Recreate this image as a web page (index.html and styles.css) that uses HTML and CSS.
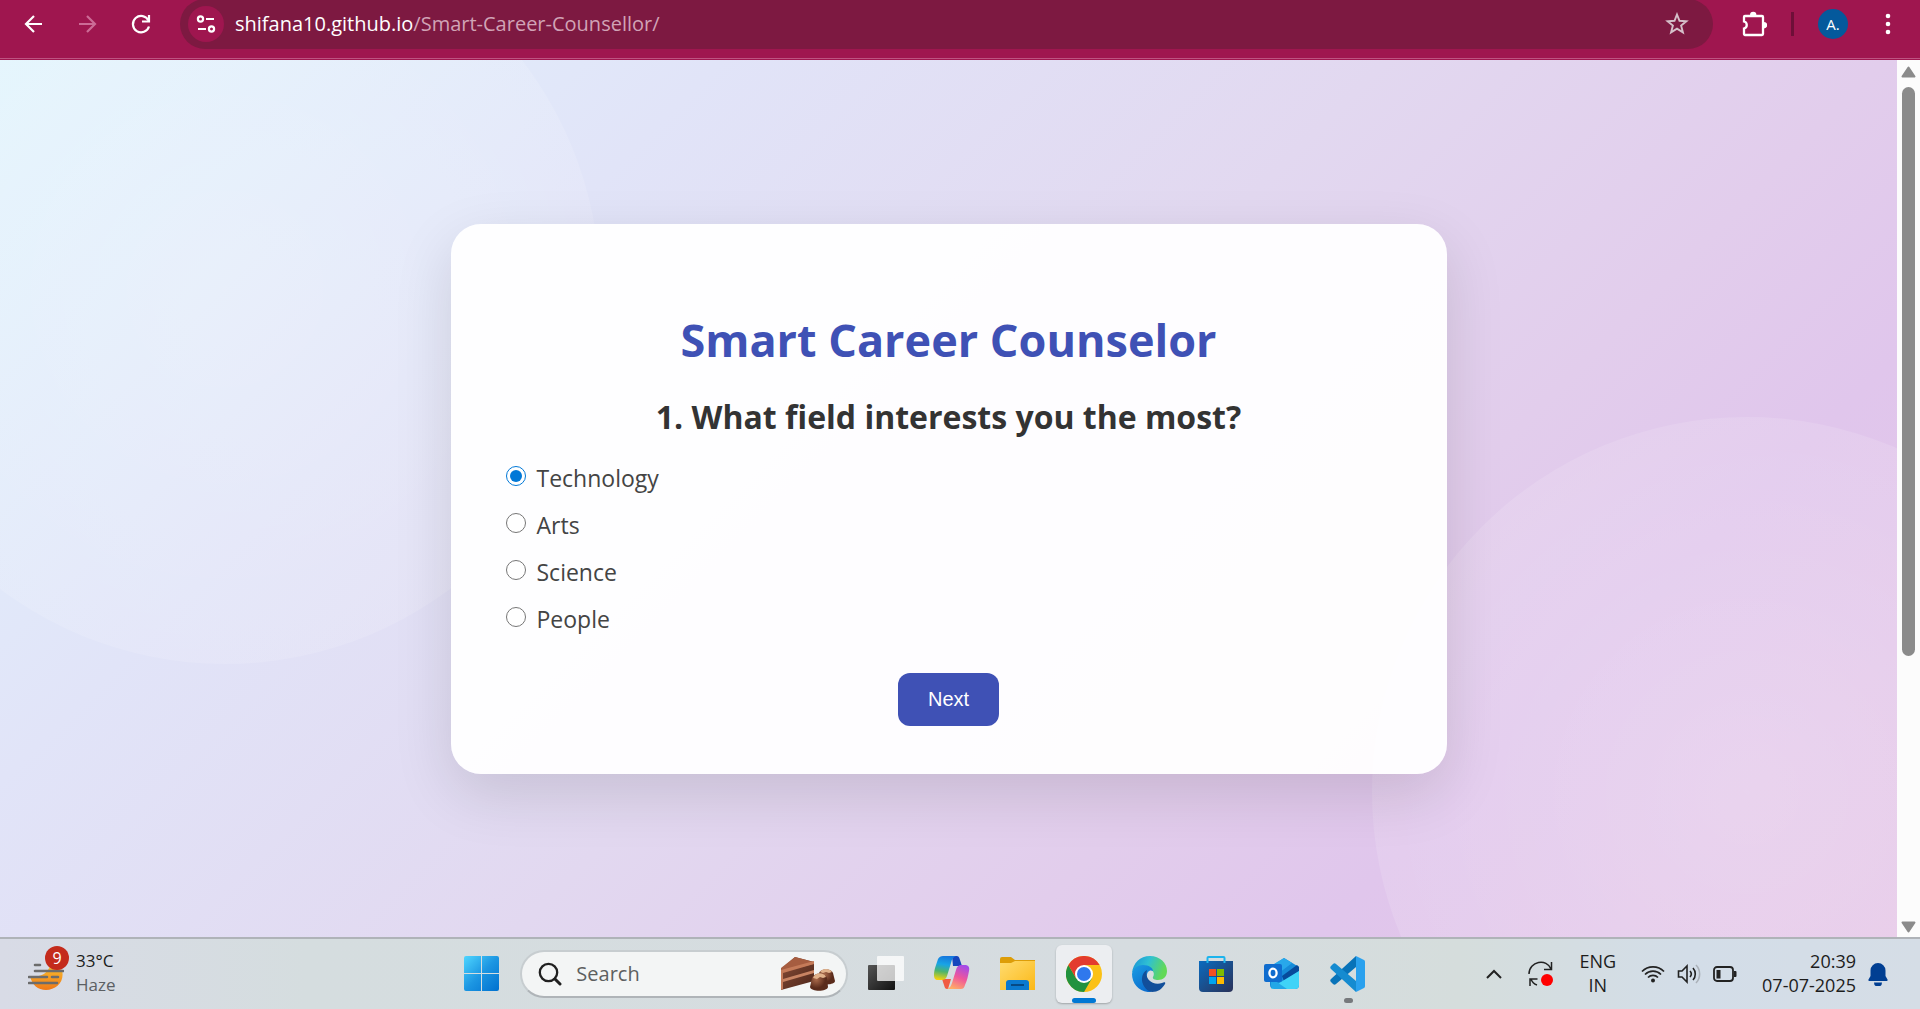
FILE: index.html
```html
<!DOCTYPE html>
<html lang="en">
<head>
<meta charset="utf-8">
<title>Smart Career Counselor</title>
<link rel="stylesheet" href="styles.css">
</head>
<body>
<header class="toolbar">
  <nav class="nav-buttons" aria-label="Navigation">
    <button class="icon-button" type="button" aria-label="Back"><svg width="22" height="22" viewBox="0 0 22 22"><path d="M20 11H4M12 3l-8 8 8 8" fill="none" stroke="#fff" stroke-width="2.2"/></svg></button>
    <button class="icon-button" type="button" aria-label="Forward"><svg width="22" height="22" viewBox="0 0 22 22"><path d="M3 11h16M11 3l8 8-8 8" fill="none" stroke="#cc6b96" stroke-width="2.2"/></svg></button>
    <button class="icon-button" type="button" aria-label="Reload"><svg width="22" height="22" viewBox="0 0 22 22"><path d="M18.500 7.500A8.200 8.200 0 1 0 19 13.500" fill="none" stroke="#fff" stroke-width="2.200"/><path d="M19 2v6.500h-7" fill="none" stroke="#fff" stroke-width="2.200"/></svg></button>
  </nav>
  <div class="omnibox">
    <button class="site-info" type="button" aria-label="Site information"><svg width="22" height="22" viewBox="0 0 22 22" fill="none" stroke="#fff" stroke-width="2.200"><circle cx="5.500" cy="6" r="2.600"/><path d="M11 6h8M3 16h8"/><circle cx="16.500" cy="16" r="2.600"/></svg></button>
    <a class="address" href="#">shifana10.github.io<span class="address-path">/Smart-Career-Counsellor/</span></a>
    <button class="icon-button" type="button" aria-label="Bookmark"><svg width="24" height="24" viewBox="0 0 24 24"><path d="M12 2.500l2.500 6.300 6.900.4-5.300 4.400 1.800 6.700-5.900-3.700-5.900 3.700 1.800-6.700-5.300-4.400 6.900-.4z" fill="none" stroke="#d5bfc9" stroke-width="1.900"/></svg></button>
  </div>
  <div class="toolbar-end">
    <button class="icon-button" type="button" aria-label="Extensions"><svg width="26" height="26" viewBox="0 0 26 26"><path d="M4 5h17a1 1 0 0 1 1 1v17a1 1 0 0 1-1 1H4a1 1 0 0 1-1-1v-5.500a3.600 3.600 0 0 0 0-7V6a1 1 0 0 1 1-1z" fill="none" stroke="#fff" stroke-width="2.300"/><path d="M9 4a3.200 3.200 0 0 1 6.400 0zM23 11a3.200 3.200 0 0 1 0 6.400z" fill="#fff"/></svg></button>
    <span class="divider"></span>
    <button class="avatar" type="button">A.</button>
    <button class="icon-button" type="button" aria-label="Menu"><svg width="8" height="24" viewBox="0 0 8 24" fill="#fff"><circle cx="4" cy="4" r="2.300"/><circle cx="4" cy="12" r="2.300"/><circle cx="4" cy="20" r="2.300"/></svg></button>
  </div>
</header>

<div class="viewport">
  <main class="page">
    <form class="card">
      <h1 class="title">Smart Career Counselor</h1>
      <fieldset class="question">
        <legend class="question-text">1. What field interests you the most?</legend>
        <label class="option"><input class="radio" type="radio" name="field" checked>Technology</label>
        <label class="option"><input class="radio" type="radio" name="field">Arts</label>
        <label class="option"><input class="radio" type="radio" name="field">Science</label>
        <label class="option"><input class="radio" type="radio" name="field">People</label>
      </fieldset>
      <button class="next" type="button">Next</button>
    </form>
  </main>
  <div class="scrollbar">
    <svg width="15" height="12" viewBox="0 0 15 12"><path d="M7.500 1.500L13.500 10.500H1.500z" fill="#8b8b8b" stroke="#8b8b8b" stroke-width="2" stroke-linejoin="round"/></svg>
    <div class="track"><div class="thumb"></div></div>
    <svg width="15" height="12" viewBox="0 0 15 12"><path d="M7.500 10.500L13.500 1.500H1.500z" fill="#8b8b8b" stroke="#8b8b8b" stroke-width="2" stroke-linejoin="round"/></svg>
  </div>
</div>

<footer class="taskbar">
  <button class="weather" type="button">
    <span class="weather-icon">
      <svg width="36" height="36" viewBox="0 0 36 36"><defs><linearGradient id="sun" x2="0" y2="1"><stop stop-color="#f8bd2d"/><stop offset="1" stop-color="#f07818"/></linearGradient></defs><path d="M2 20C14 22 20 16 22 10l12 4c3 12-6 20-16 20C10 34 4 29 2 20z" fill="url(#sun)"/><path d="M7 9h5M7 15h28M1 21h18M24 21h6M1 27h28" stroke="#6c6c6c" stroke-width="2.600" stroke-linecap="round"/></svg>
      <span class="badge">9</span>
    </span>
    <span class="stack"><span>33°C</span><span class="muted">Haze</span></span>
  </button>

  <div class="apps">
    <button class="app" type="button" aria-label="Start"><svg width="36" height="36" viewBox="0 0 36 36"><defs><linearGradient id="win" x2="1" y2="1"><stop stop-color="#4fd6ff"/><stop offset=".5" stop-color="#1c96e2"/><stop offset="1" stop-color="#0070cf"/></linearGradient></defs><path d="M2 0h15v17H0V2a2 2 0 0 1 2-2zM18 0h15a2 2 0 0 1 2 2v15H18zM0 18h17v17H2a2 2 0 0 1-2-2zM18 18h17v15a2 2 0 0 1-2 2H18z" fill="url(#win)"/></svg></button>
    <div class="search">
      <svg width="24" height="24" viewBox="0 0 24 24" fill="none" stroke="#202020"><circle cx="10.500" cy="10.500" r="8.700" stroke-width="2.300"/><path d="M17 17l5 5" stroke-width="3" stroke-linecap="round"/></svg>
      <input class="search-input" type="text" placeholder="Search" aria-label="Search">
      <svg width="54" height="36" viewBox="0 0 54 36"><defs><linearGradient id="cake" x2="1" y2="1"><stop stop-color="#8a4e38"/><stop offset="1" stop-color="#4b2519"/></linearGradient><radialGradient id="choc" cx=".35" cy=".35"><stop stop-color="#a9694a"/><stop offset="1" stop-color="#5a2b1b"/></radialGradient></defs><path d="M0 13L14 1l19 5v19L0 34z" fill="url(#cake)"/><path d="M0 12L14 1l19 5v2L0 16z" fill="#a65d40"/><path d="M0 14l33-9v3L2 17v16l-2 1z" fill="#c57b59"/><path d="M2 23l31-9v3L2 26z" fill="#c88463"/><path d="M38 17c2-5 12-5 14 0l2 8c0 4-14 5-14 0z" fill="url(#choc)"/><path d="M31 22c2-6 13-6 15 0l1 9c-1 5-17 5-18 0z" fill="url(#choc)"/><path d="M32 22c2-6 11-6 13-1l-3 1-3-1-3 2zM39 16c2-4 10-4 12 0l-3 1-3-1-3 1z" fill="#e1b28b"/></svg>
    </div>
    <button class="app" type="button" aria-label="Task view"><svg width="36" height="36" viewBox="0 0 36 36"><defs><linearGradient id="dark" x2="1" y2="1"><stop stop-color="#555"/><stop offset="1" stop-color="#111"/></linearGradient></defs><rect y="9" width="27" height="25" rx="1" fill="url(#dark)"/><rect x="9" width="27" height="25" rx="1" fill="#fff" opacity=".75"/></svg></button>
    <button class="app" type="button" aria-label="Copilot"><svg width="36" height="36" viewBox="0 0 36 36"><defs><linearGradient id="cpa" x1=".5" x2=".35" y2="1"><stop stop-color="#1677dd"/><stop offset=".35" stop-color="#18a4e6"/><stop offset=".65" stop-color="#4db46c"/><stop offset="1" stop-color="#f4d20d"/></linearGradient><linearGradient id="cpb" x1=".7" x2=".3" y2="1"><stop stop-color="#a44be8"/><stop offset=".5" stop-color="#ef569b"/><stop offset="1" stop-color="#ffad66"/></linearGradient></defs><path d="M18 0h4c3 0 3 1 4 4l2 6h-9z" fill="#1646bd"/><path d="M8 23h9l-3 10c-3 0-3-1-4-4z" fill="#f05a43"/><path d="M9 0h13c-3 1-4 3-5 7l-4 13c-1 3-3 4-6 4H4c-3 0-4-2-4-5C0 13 3 7 4 3c1-2 3-3 5-3z" fill="url(#cpa)"/><path d="M27 33H13c3-1 4-3 5-6l4-13c1-4 3-5 6-5h3c3 0 5 2 4 6-1 5-2 10-4 14-1 3-2 4-4 4z" fill="url(#cpb)"/></svg></button>
    <button class="app" type="button" aria-label="File Explorer"><svg width="36" height="36" viewBox="0 0 36 36"><defs><linearGradient id="fold" x2="1" y2="1"><stop stop-color="#ffdc70"/><stop offset="1" stop-color="#fbb817"/></linearGradient></defs><path d="M0 3a2 2 0 0 1 2-2h9l4 3h20v8H0z" fill="#dd9d08"/><path d="M0 7h11l4-2h20v29H0z" fill="url(#fold)"/><path d="M6 34v-7a3 3 0 0 1 3-3h17a3 3 0 0 1 3 3v7z" fill="#0b79cf"/><path d="M11 29h13" stroke="#074984" stroke-width="2"/></svg></button>
    <button class="app app-active" type="button" aria-label="Chrome"><svg width="36" height="36" viewBox="0 0 36 36"><circle cx="18" cy="18" r="18" fill="#fbc116"/><path d="M2.400 9A18 18 0 0 0 18 36l7.800-13.500H10.200z" fill="#22923f"/><path d="M18 9h15.600A18 18 0 0 0 2.400 9l7.800 13.500z" fill="#e33b2e"/><circle cx="18" cy="18" r="9" fill="#fff"/><circle cx="18" cy="18" r="7" fill="#2f78ed"/></svg></button>
    <button class="app" type="button" aria-label="Edge"><svg width="36" height="36" viewBox="0 0 36 36"><defs><linearGradient id="ea" x2="1" y2=".3"><stop stop-color="#168fd8"/><stop offset=".5" stop-color="#2fc0d3"/><stop offset="1" stop-color="#62d957"/></linearGradient><linearGradient id="eb" x2=".6" y2="1"><stop stop-color="#1b9de3"/><stop offset="1" stop-color="#0b6dce"/></linearGradient></defs><path d="M0 17C1 7 8 0 18 0c10 0 17 7 17 15 0 6-4 9-9 9-3 0-6-1-5-3 3-5-2-9-8-9C6 12 2 14 0 17z" fill="url(#ea)"/><path d="M0 18c1-6 6-9 11-9 6 0 10 3 10 6-4-2-7 2-6 7l4 14C8 37 0 28 0 18z" fill="url(#eb)"/><path d="M15 14c-9 5-5 20 5 22 6 0 10-3 13-8 1-2-1-2-3-1-8 3-18-3-15-13z" fill="#124f9a"/></svg></button>
    <button class="app" type="button" aria-label="Microsoft Store"><svg width="36" height="36" viewBox="0 0 36 36"><defs><linearGradient id="store" x2="1" y2="1"><stop stop-color="#0b6bbf"/><stop offset="1" stop-color="#2a3158"/></linearGradient></defs><path d="M1 5h34v27a4 4 0 0 1-4 4H5a4 4 0 0 1-4-4z" fill="url(#store)"/><path d="M9.500 7V2a1 1 0 0 1 1-1h15a1 1 0 0 1 1 1v5" fill="none" stroke="#1cb4ed" stroke-width="2"/><path d="M11 13h7v7h-7z" fill="#f25022"/><path d="M19 13h7v7h-7z" fill="#7fba00"/><path d="M11 21h7v7h-7z" fill="#00a4ef"/><path d="M19 21h7v7h-7z" fill="#ffb900"/></svg></button>
    <button class="app" type="button" aria-label="Outlook"><svg width="36" height="36" viewBox="0 0 36 36"><path d="M6 11L20 2l15 9v18a4 4 0 0 1-4 4H10a4 4 0 0 1-4-4z" fill="#168bd8"/><path d="M10 8l10-6 8 5-13 10z" fill="#28a8ea"/><path d="M18 20l15-11 2 2v4L20 25z" fill="#074a9b"/><path d="M35 15v14a4 4 0 0 1-4 4H10a4 4 0 0 1-3-1z" fill="#3fd3f7"/><path d="M7 22l16 11H10a4 4 0 0 1-3-3z" fill="#22a7e7"/><rect y="8" width="18" height="18" rx="2" fill="#0f6cce"/><ellipse cx="9" cy="17" rx="3.600" ry="4.300" fill="none" stroke="#fff" stroke-width="2.300"/></svg></button>
    <button class="app app-running" type="button" aria-label="Visual Studio Code"><svg width="36" height="36" viewBox="0 0 36 36"><path d="M26 0L1 23c-1 1-1 2 0 3l2 2c1 1 2 1 3 0L26 11z" fill="#0873b9"/><path d="M26 36L1 13c-1-1-1-2 0-3l2-2c1-1 2-1 3 0l20 17z" fill="#158bd0"/><path d="M26 0l8 4a2 2 0 0 1 1 2v24a2 2 0 0 1-1 2l-8 4z" fill="#2aa1ee"/></svg></button>
  </div>

  <div class="tray">
    <button class="tray-button" type="button" aria-label="Show hidden icons"><svg width="18" height="12" viewBox="0 0 18 12"><path d="M2 10l7-7 7 7" fill="none" stroke="#222" stroke-width="2"/></svg></button>
    <button class="tray-button" type="button" aria-label="Updates"><svg width="26" height="26" viewBox="0 0 26 26" fill="none" stroke="#222" stroke-width="1.500"><path d="M1 13C1 0 19-3 23 8M23.500 1v7.500H16M9 24c-3-1-5-3-6-6M2 25v-7h7.500"/><circle cx="19" cy="19" r="6" fill="#f00" stroke="none"/></svg></button>
    <button class="tray-button stack stack-center" type="button"><span>ENG</span><span>IN</span></button>
    <div class="status">
      <svg width="24" height="18" viewBox="0 0 24 18" fill="none" stroke="#222" stroke-width="1.700"><path d="M1 6.500a15.500 15.500 0 0 1 22 0M4 9.500a11.300 11.300 0 0 1 16 0M7 12.500a7 7 0 0 1 10 0"/><circle cx="12" cy="15.500" r="2" fill="#222" stroke="none"/></svg>
      <svg width="24" height="20" viewBox="0 0 24 20" fill="none" stroke="#222" stroke-width="1.600"><path d="M1.500 7H5l5-5v16l-5-5H1.500zM13 7a4.500 4.500 0 0 1 0 6M16 4a9 9 0 0 1 0 12"/><path d="M19 1a13 13 0 0 1 0 18" stroke="#aab0b8"/></svg>
      <svg width="24" height="16" viewBox="0 0 24 16"><rect x="1" y="1" width="19" height="14" rx="3" fill="none" stroke="#222" stroke-width="1.800"/><path d="M3.500 4h4v8.500h-4zM21 5h1.500a1 1 0 0 1 1 1v4a1 1 0 0 1-1 1H21z" fill="#222"/></svg>
    </div>
    <div class="status">
      <button class="tray-button stack stack-end" type="button"><span>20:39</span><span>07-07-2025</span></button>
      <button class="tray-button" type="button" aria-label="Notifications"><svg width="20" height="24" viewBox="0 0 20 24" fill="#003e92"><path d="M10 1a7.500 7.500 0 0 1 7.500 7.500V14l2 3.500c.3.700 0 1.500-1 1.500h-17c-1 0-1.300-.8-1-1.500l2-3.500V8.500A7.500 7.500 0 0 1 10 1zM6 20.500h8a4 4 0 0 1-8 0z"/></svg></button>
    </div>
  </div>
</footer>
</body>
</html>
```
FILE: styles.css
```css
* { box-sizing: border-box; }

body {
  margin: 0;
  min-height: 100vh;
  display: flex;
  flex-direction: column;
  font-family: "Open Sans", "Noto Sans", sans-serif;
  color: #333;
}

button {
  margin: 0;
  padding: 0;
  border: 0;
  background: none;
  font: inherit;
  color: inherit;
}

svg { display: block; flex: none; }

/* Browser toolbar */
.toolbar {
  display: flex;
  align-items: center;
  height: 60px;
  padding: 0 28px 12px 22px;
  background: #9f164f;
  border-bottom: 1px solid #9f164f;
  box-shadow: inset 0 -1px #bd5381;
}

.nav-buttons { display: flex; gap: 32px; }

.omnibox {
  flex: 1;
  display: flex;
  align-items: center;
  height: 50px;
  margin: 0 28px;
  padding: 0 24px 0 8px;
  border-radius: 25px;
  background: #7d1941;
}

.site-info {
  display: grid;
  place-items: center;
  width: 36px;
  height: 36px;
  margin-right: 11px;
  border-radius: 50%;
  background: #9f164f;
}

.address {
  flex: 1;
  font-size: 20px;
  line-height: 24px;
  color: #fff;
  text-decoration: none;
}

.address-path { color: #d1a3b6; }

.toolbar-end { display: flex; align-items: center; }

.divider {
  width: 3px;
  height: 24px;
  margin: 0 24px;
  background: #6e0f38;
}

.avatar {
  width: 30px;
  height: 30px;
  margin-right: 36px;
  border-radius: 50%;
  background: #04599c;
  color: #fff;
  font-size: 15px;
}

/* Web page */
.viewport { flex: 1; display: flex; }

.page {
  position: relative;
  z-index: 0;
  overflow: hidden;
  flex: 1;
  display: flex;
  align-items: center;
  justify-content: center;
  background: linear-gradient(135deg, #e1f4fd, #e1e4f8 26%, #e2d8f0 50%, #e2cdec 68%, #e0c6ec 79%, #e4c4e6);
}

.page::before,
.page::after {
  content: "";
  position: absolute;
  z-index: -1;
  width: 750px;
  height: 750px;
  border-radius: 50%;
}

.page::before {
  top: -146px;
  left: -150px;
  background: radial-gradient(circle, rgb(255 255 255 / 25%), rgb(255 255 255 / 12%) 70%);
}

.page::after {
  right: -225px;
  bottom: -230px;
  background: radial-gradient(circle, rgb(255 255 255 / 25%), rgb(255 255 255 / 12%) 70%);
}

.card {
  width: 996px;
  max-width: 90%;
  padding: 80px 50px 48px;
  border-radius: 30px;
  background: rgb(255 255 255 / 95%);
  box-shadow: 0 20px 60px rgb(0 0 0 / 12%);
  text-align: center;
}

.title {
  margin: 0 0 17px;
  font-size: 45px;
  line-height: 72px;
  color: #3f51b5;
}

.question { margin: 0; padding: 0; border: 0; }

.question-text {
  width: 100%;
  margin-bottom: 14px;
  padding: 0;
  font-size: 32px;
  font-weight: 700;
  line-height: 48px;
}

.option {
  display: flex;
  align-items: center;
  gap: 11px;
  height: 47px;
  padding-left: 5px;
  font-size: 23px;
  color: #444;
}

.radio {
  width: 20px;
  height: 20px;
  margin: 0 0 4px;
  accent-color: #0078d7;
}

.next {
  margin-top: 30px;
  padding: 14px 30px;
  border-radius: 12px;
  background: #3f51b5;
  color: #fff;
  font-family: "Liberation Sans", Arial, sans-serif;
  font-size: 20px;
  line-height: 25px;
}

.scrollbar {
  display: flex;
  flex-direction: column;
  align-items: center;
  gap: 9px;
  width: 23px;
  padding: 6px 0 4px;
  background: #fcfcfc;
}

.track { flex: 1; width: 13px; }

.thumb { height: 69%; border-radius: 7px; background: #8b8b8b; }

/* Taskbar */
.taskbar {
  display: grid;
  grid-template-columns: 10fr auto 12fr;
  align-items: center;
  height: 72px;
  padding: 0 32px 0 28px;
  border-top: 2px solid #afb3b8;
  background: linear-gradient(90deg, #d8dbe6, #d5dddf 16%, #d6dce0 60%, #d5dddc 76%, #d3dde8 88%, #d5dde6);
  font-size: 17px;
  line-height: 24px;
  color: #1c1c1c;
}

.weather {
  display: flex;
  align-items: center;
  gap: 12px;
  justify-self: start;
}

.weather-icon { position: relative; }

.badge {
  position: absolute;
  top: -10px;
  right: -5px;
  width: 24px;
  height: 24px;
  border-radius: 50%;
  background: #c42b1c;
  color: #fff;
  font-size: 16px;
  text-align: center;
}

.stack { display: flex; flex-direction: column; padding-bottom: 2px; text-align: left; }
.stack-center { align-items: center; }
.stack-end { align-items: flex-end; }
.muted { color: #5c5f63; }

.apps { display: flex; align-items: center; gap: 10px; }

.app {
  position: relative;
  display: grid;
  place-items: center;
  width: 56px;
  height: 58px;
  border-radius: 6px;
}

.app-active { background: #eceef1; box-shadow: 0 1px 2px rgb(0 0 0 / 25%); }

.app-active::after,
.app-running::after {
  content: "";
  position: absolute;
  bottom: 0;
  width: 24px;
  height: 5px;
  border-radius: 3px;
  background: #0078d4;
}

.app-running::after { width: 9px; background: #76797c; }

.search {
  display: flex;
  align-items: center;
  gap: 14px;
  width: 328px;
  height: 48px;
  padding: 0 11px 0 16px;
  border: 2px solid #c7cdd0;
  border-bottom-color: #afb4b8;
  border-radius: 24px;
  background: #f3f5f5;
}

.search-input {
  flex: 1;
  min-width: 0;
  padding: 0;
  border: 0;
  background: none;
  font: inherit;
  font-size: 20px;
}

.search-input::placeholder { color: #5d5f60; }

.tray {
  display: flex;
  align-items: center;
  gap: 25px;
  justify-self: end;
  font-size: 18px;
}

.status { display: flex; align-items: center; gap: 12px; }
```
